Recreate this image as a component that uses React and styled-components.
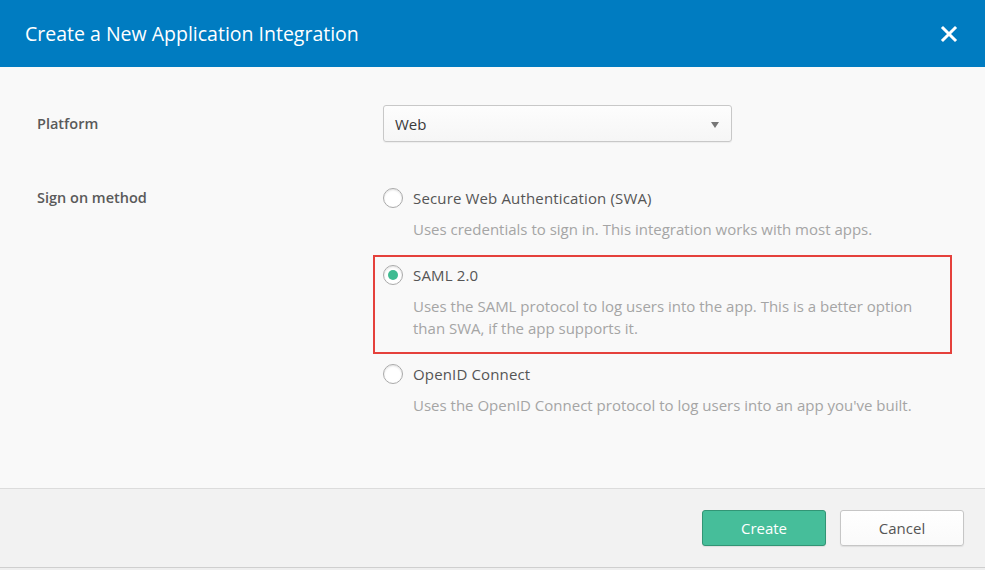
import React, { useState } from "react";
import styled, { createGlobalStyle } from "styled-components";

const GlobalStyle = createGlobalStyle`
  html, body {
    margin: 0;
    padding: 0;
    background: #f0f0f0;
  }
  body {
    font-family: "Open Sans", "Liberation Sans", sans-serif;
    -webkit-font-smoothing: antialiased;
  }
  * {
    box-sizing: border-box;
  }
`;

const Modal = styled.div`
  width: 985px;
  height: 570px;
  display: flex;
  flex-direction: column;
  overflow: hidden;
  background: #f9f9f9;
`;

const Header = styled.header`
  height: 67px;
  flex: none;
  display: flex;
  align-items: center;
  justify-content: space-between;
  padding: 0 27px 0 25px;
  background: #007cc1;
  color: #fff;

  h1 {
    margin: 0 0 1px;
    font-size: 19.5px;
    font-weight: 400;
  }
`;

const CloseButton = styled.button`
  width: 18px;
  height: 18px;
  padding: 0;
  border: none;
  background: none;
  cursor: pointer;
  display: flex;

  svg {
    width: 18px;
    height: 18px;
  }
`;

const Body = styled.section`
  flex: none;
  display: grid;
  grid-template-columns: 346px 1fr;
  row-gap: 45px;
  padding: 38px 0 72px 37px;
  border-bottom: 1px solid #dcdcdc;
`;

const Label = styled.div`
  font-size: 14.5px;
  font-weight: 600;
  color: #5a5a5a;
  line-height: 22px;
  align-self: ${(p) => (p.center ? "center" : "start")};
`;

const Select = styled.div`
  width: 349px;
  height: 37px;
  display: flex;
  align-items: center;
  justify-content: space-between;
  padding: 0 12px 0 11px;
  border: 1px solid #c8c8c8;
  border-radius: 3px;
  background: linear-gradient(#fdfdfd, #f6f6f6);
  box-shadow: 0 1px 1px rgba(0, 0, 0, 0.05);
  font-size: 15px;
  color: #3a3a3a;

  &::after {
    content: "";
    border-left: 4.5px solid transparent;
    border-right: 4.5px solid transparent;
    border-top: 6px solid #777;
    margin-top: 2px;
  }
`;

const Options = styled.div`
  display: flex;
  flex-direction: column;
  gap: 24px;
`;

const Option = styled.label`
  position: relative;
  display: flex;
  flex-direction: column;
  gap: 9px;
  cursor: pointer;

  &::after {
    content: "";
    display: ${(p) => (p.highlight ? "block" : "none")};
    position: absolute;
    top: -9px;
    bottom: -15px;
    left: -10px;
    width: 575px;
    border: 2px solid #e5413c;
    pointer-events: none;
  }
`;

const OptionTitle = styled.div`
  display: flex;
  align-items: center;
  gap: 10px;
  height: 22px;
  font-size: 15px;
  letter-spacing: 0.15px;
  color: #555;
`;

const Radio = styled.span`
  width: 20px;
  height: 20px;
  flex: none;
  border-radius: 50%;
  border: 1px solid #aaa;
  background: #fff;
  box-shadow: inset 0 1px 2px rgba(0, 0, 0, 0.12);
  display: flex;
  align-items: center;
  justify-content: center;

  &::after {
    content: "";
    width: 10px;
    height: 10px;
    border-radius: 50%;
    background: #3fbb91;
    display: ${(p) => (p.checked ? "block" : "none")};
  }
`;

const Description = styled.div`
  padding-left: 30px;
  max-width: 560px;
  font-size: 15px;
  line-height: 22px;
  color: #a5a5a5;
`;

const Footer = styled.footer`
  flex: none;
  height: 79px;
  display: flex;
  justify-content: flex-end;
  align-items: center;
  gap: 14px;
  padding: 0 21px 1px 0;
  background: #f2f2f2;
  border-bottom: 1px solid #cfcfcf;
`;

const Button = styled.button`
  width: 124px;
  height: 36px;
  border-radius: 3px;
  font-family: inherit;
  font-size: 15px;
  cursor: pointer;
  border: 1px solid ${(p) => (p.primary ? "#329575" : "#c6c6c6")};
  background: ${(p) => (p.primary ? "#46be9a" : "linear-gradient(#ffffff, #fafafa)")};
  color: ${(p) => (p.primary ? "#fff" : "#555")};
  box-shadow: 0 1px 1px rgba(0, 0, 0, 0.08);
`;

const PageEdge = styled.div`
  flex: 1;
  background: #efefef;
`;

const methods = [
  {
    id: "swa",
    title: "Secure Web Authentication (SWA)",
    desc: "Uses credentials to sign in. This integration works with most apps.",
  },
  {
    id: "saml",
    title: "SAML 2.0",
    desc: "Uses the SAML protocol to log users into the app. This is a better option than SWA, if the app supports it.",
  },
  {
    id: "oidc",
    title: "OpenID Connect",
    desc: "Uses the OpenID Connect protocol to log users into an app you've built.",
  },
];

const App = () => {
  const [method, setMethod] = useState("saml");

  return (
    <Modal>
      <GlobalStyle />
      <Header>
        <h1>Create a New Application Integration</h1>
        <CloseButton aria-label="Close">
          <svg viewBox="0 0 18 18">
            <path d="M3 3 L15 15 M15 3 L3 15" stroke="#fff" strokeWidth="3" strokeLinecap="square" />
          </svg>
        </CloseButton>
      </Header>

      <Body>
        <Label center>Platform</Label>
        <Select>Web</Select>

        <Label>Sign on method</Label>
        <Options>
          {methods.map((m) => (
            <Option key={m.id} highlight={m.id === "saml"} onClick={() => setMethod(m.id)}>
              <OptionTitle>
                <Radio checked={method === m.id} />
                {m.title}
              </OptionTitle>
              <Description>{m.desc}</Description>
            </Option>
          ))}
        </Options>
      </Body>

      <Footer>
        <Button primary>Create</Button>
        <Button>Cancel</Button>
      </Footer>
      <PageEdge />
    </Modal>
  );
};

export default App;
